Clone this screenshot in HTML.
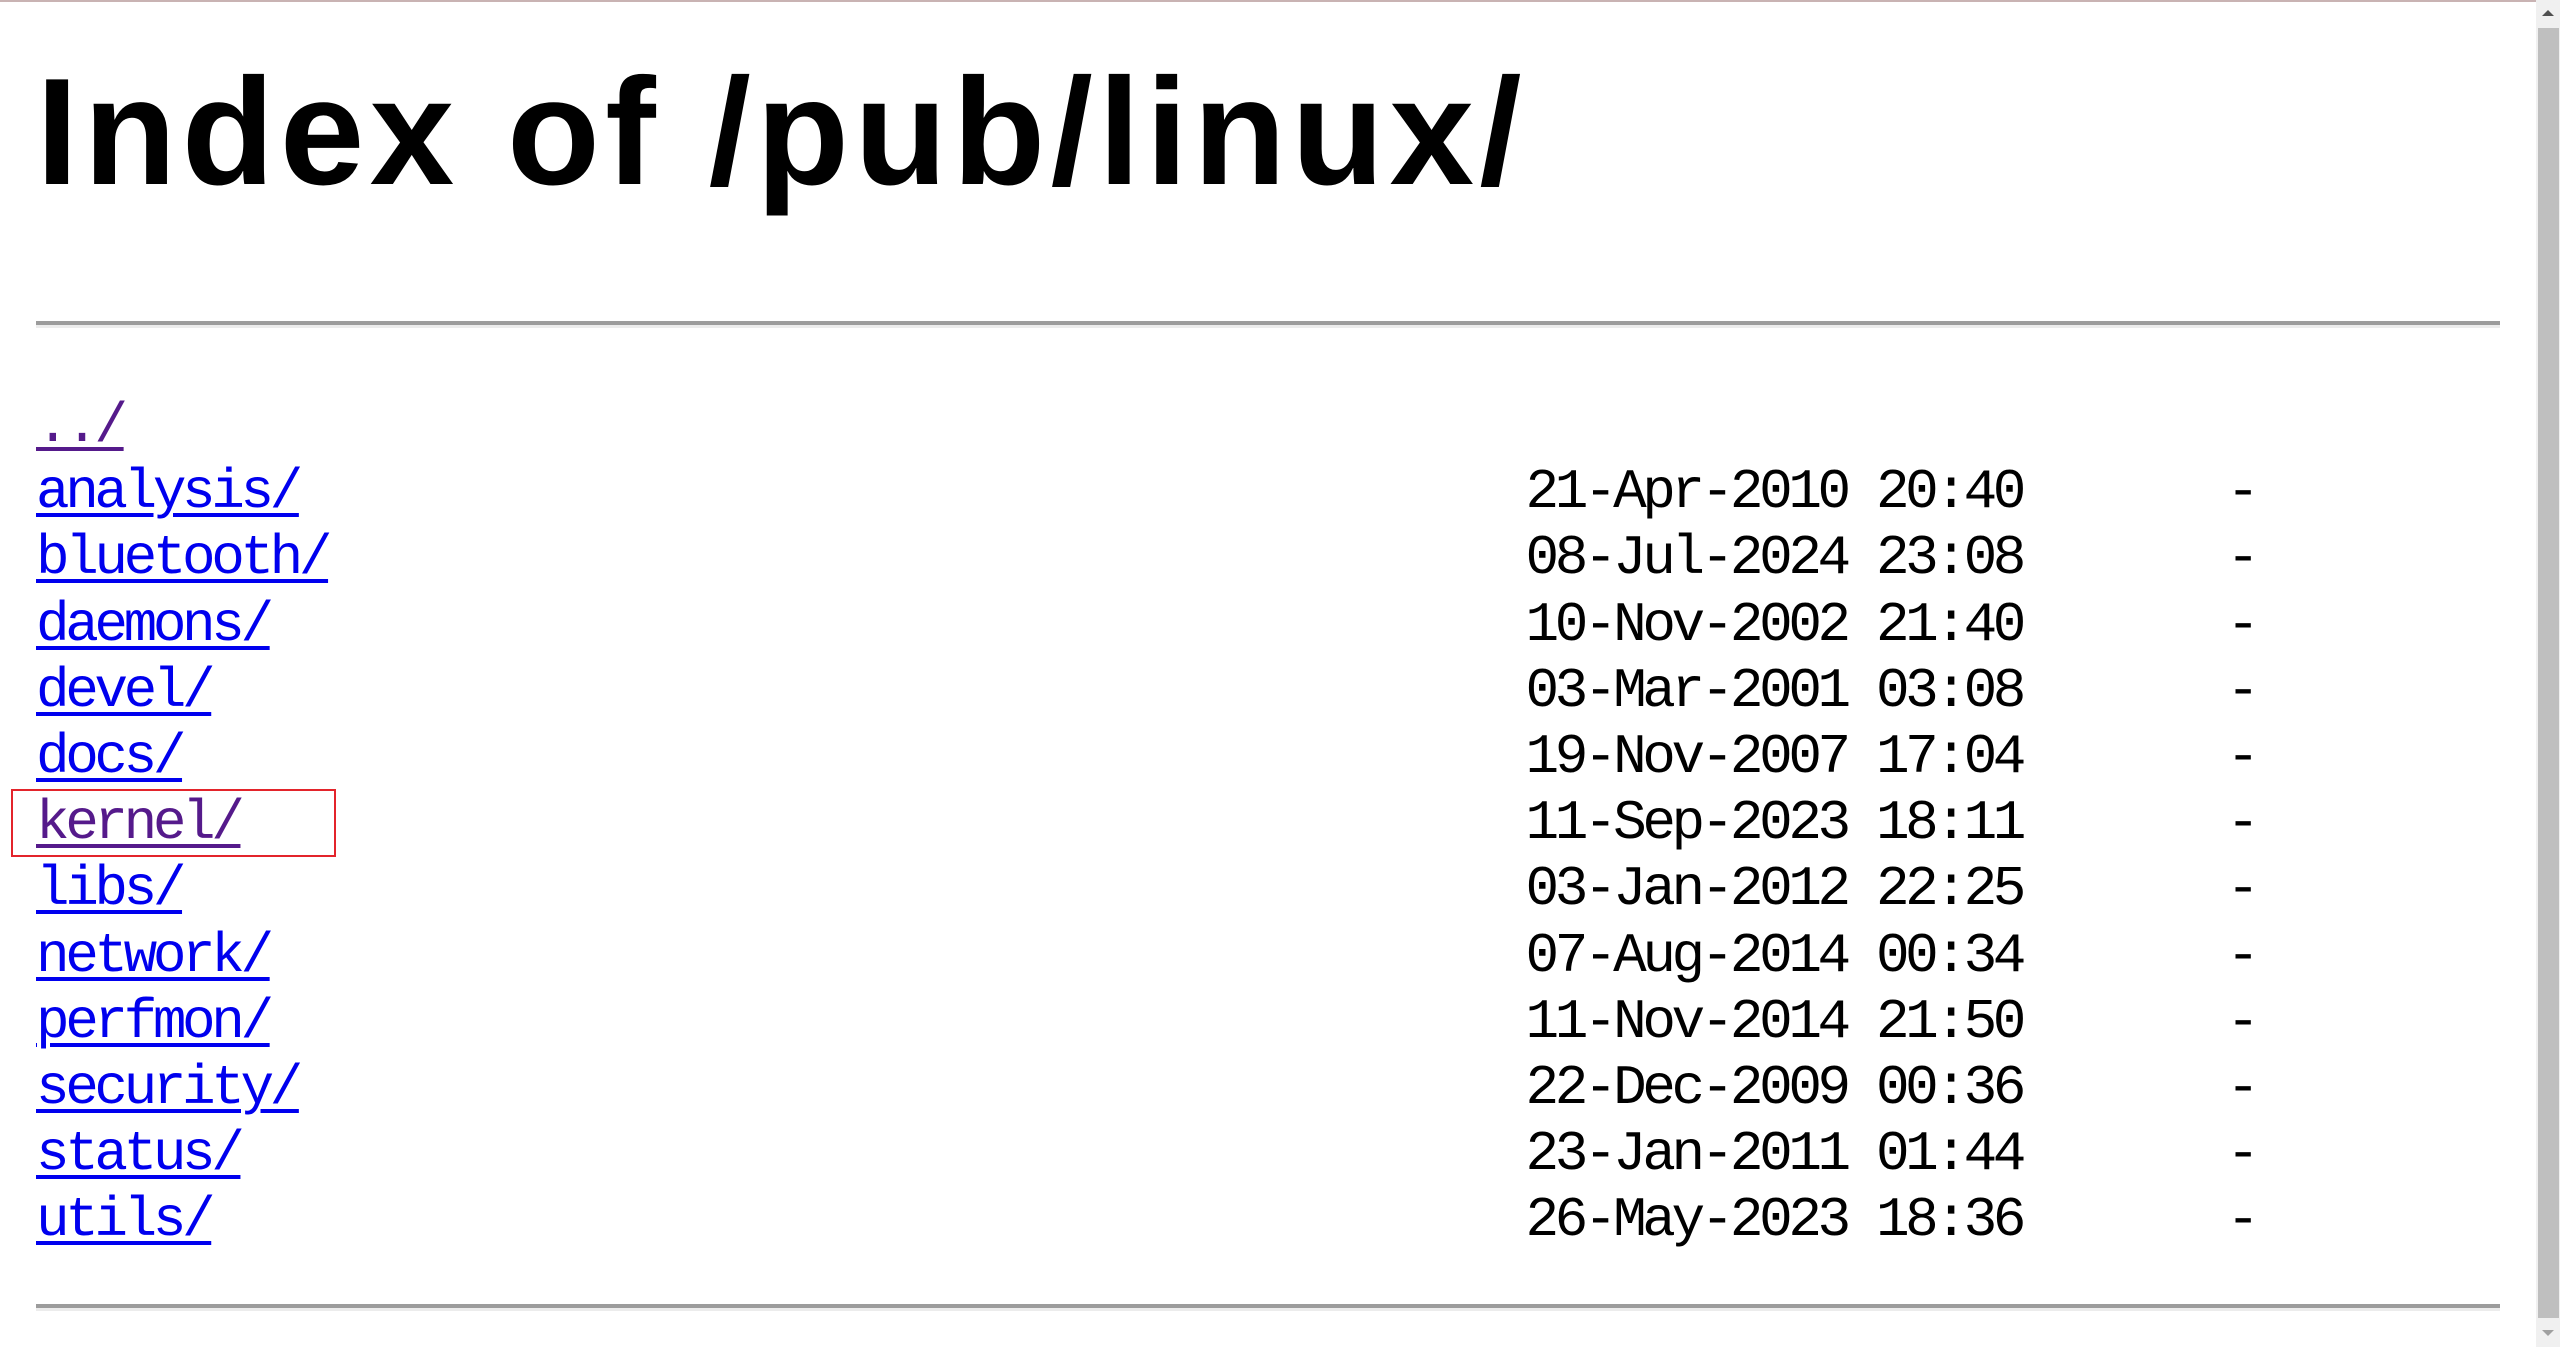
<!DOCTYPE html>
<html><head><meta charset="utf-8"><style>
html,body{margin:0;padding:0;background:#fff;overflow:hidden}
body{width:2560px;height:1347px;position:relative}
.top{position:absolute;left:0;top:0;width:2536px;height:2px;background:#c9b3b3}
h1{position:absolute;left:36px;top:0;margin:0;font:bold 152px/1 "Liberation Sans",sans-serif;letter-spacing:5.3px;white-space:nowrap}
.hr{position:absolute;left:36px;width:2464px;height:4px;background:#9c9c9c;border-bottom:3px solid #ececec}
pre{position:absolute;left:36px;top:393px;margin:0;font:56px/66.2px "Liberation Mono",monospace;letter-spacing:-4.4px;color:#000}
a{color:#0000ee;text-decoration:underline;text-decoration-thickness:4px;text-underline-offset:6px}
a.v{color:#551a8b}
.box{position:absolute;left:11px;top:789px;width:321px;height:64px;border:2px solid #e3242b}
.sb{position:absolute;left:2536px;top:0;width:24px;height:1347px;background:#f0f0f0}
.th{position:absolute;left:2538px;top:28px;width:21px;height:1290px;background:#bfbfbf}
.ar{position:absolute;left:2542px;top:10px;width:0;height:0;border-left:6px solid transparent;border-right:6px solid transparent;border-bottom:6px solid #505050}
.ar2{position:absolute;left:2542px;top:1330px;width:0;height:0;border-left:6px solid transparent;border-right:6px solid transparent;border-top:6px solid #a0a0a0}
</style></head><body>
<div class="top"></div>
<h1 style="top:56px">Index of /pub/linux/</h1>
<div class="hr" style="top:321px"></div>
<pre><a class="v">../</a>
<a>analysis/</a>                                          21-Apr-2010 20:40       -
<a>bluetooth/</a>                                         08-Jul-2024 23:08       -
<a>daemons/</a>                                           10-Nov-2002 21:40       -
<a>devel/</a>                                             03-Mar-2001 03:08       -
<a>docs/</a>                                              19-Nov-2007 17:04       -
<a class="v">kernel/</a>                                            11-Sep-2023 18:11       -
<a>libs/</a>                                              03-Jan-2012 22:25       -
<a>network/</a>                                           07-Aug-2014 00:34       -
<a>perfmon/</a>                                           11-Nov-2014 21:50       -
<a>security/</a>                                          22-Dec-2009 00:36       -
<a>status/</a>                                            23-Jan-2011 01:44       -
<a>utils/</a>                                             26-May-2023 18:36       -
</pre>
<div class="box"></div>
<div class="hr" style="top:1304px"></div>
<div class="sb"></div><div class="th"></div><div class="ar"></div><div class="ar2"></div>
</body></html>
